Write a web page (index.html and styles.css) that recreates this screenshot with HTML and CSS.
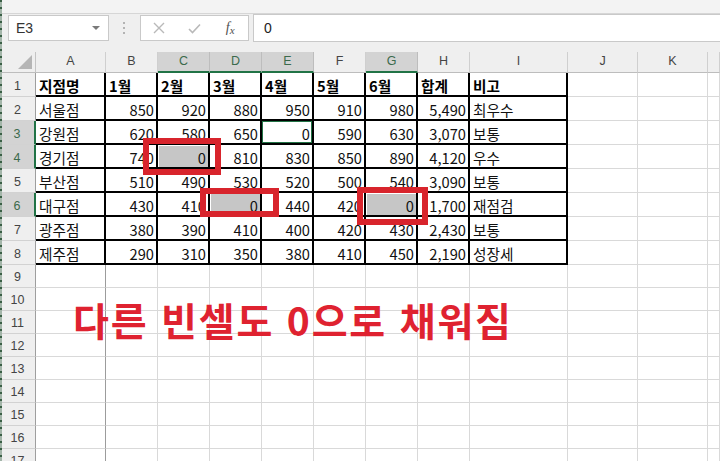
FILE: index.html
```html
<!DOCTYPE html>
<html lang="ko">
<head>
<meta charset="utf-8">
<title>Sheet</title>
<link rel="stylesheet" href="styles.css">
</head>
<body>
<div class="app">
  <div class="top"></div>
  <div class="fbar">
    <div class="namebox"><span class="ref">E3</span><span class="caret"></span></div>
    <div class="dots"><i></i><i></i><i></i></div>
    <div class="fbtns">
      <span class="fbtn"><svg width="12" height="12" viewBox="0 0 12 12"><path d="M1 1L11 11M11 1L1 11" stroke="#b9b9b9" stroke-width="1.4" fill="none"/></svg></span>
      <span class="fbtn"><svg width="13" height="11" viewBox="0 0 13 11"><path d="M1 6L4.5 9.5L12 1.5" stroke="#b9b9b9" stroke-width="1.6" fill="none"/></svg></span>
      <span class="fbtn fx">f<span class="fxs">x</span></span>
    </div>
    <div class="finput">0</div>
  </div>
  <div class="sheet">
    <div class="corner"><svg width="14" height="14" viewBox="0 0 14 14"><path d="M14 0L14 14L0 14Z" fill="#b5b5b5"/></svg></div>
    <div class="ch">A</div><div class="ch">B</div><div class="ch sel">C</div><div class="ch sel">D</div><div class="ch sel">E</div><div class="ch">F</div><div class="ch sel">G</div><div class="ch">H</div><div class="ch">I</div><div class="ch">J</div><div class="ch">K</div><div class="ch"></div>

    <div class="rh">1</div><div class="c t b">지점명</div><div class="c t b">1월</div><div class="c t b">2월</div><div class="c t b">3월</div><div class="c t b">4월</div><div class="c t b">5월</div><div class="c t b">6월</div><div class="c t b">합계</div><div class="c t b">비고</div><div class="c"></div><div class="c"></div><div class="c"></div>

    <div class="rh">2</div><div class="c t">서울점</div><div class="c t n">850</div><div class="c t n">920</div><div class="c t n">880</div><div class="c t n">950</div><div class="c t n">910</div><div class="c t n">980</div><div class="c t n">5,490</div><div class="c t">최우수</div><div class="c"></div><div class="c"></div><div class="c"></div>

    <div class="rh sel">3</div><div class="c t">강원점</div><div class="c t n">620</div><div class="c t n">580</div><div class="c t n">650</div><div class="c t n act">0</div><div class="c t n">590</div><div class="c t n">630</div><div class="c t n">3,070</div><div class="c t">보통</div><div class="c"></div><div class="c"></div><div class="c"></div>

    <div class="rh sel">4</div><div class="c t">경기점</div><div class="c t n">740</div><div class="c t n hl">0</div><div class="c t n">810</div><div class="c t n">830</div><div class="c t n">850</div><div class="c t n">890</div><div class="c t n">4,120</div><div class="c t">우수</div><div class="c"></div><div class="c"></div><div class="c"></div>

    <div class="rh">5</div><div class="c t">부산점</div><div class="c t n">510</div><div class="c t n">490</div><div class="c t n">530</div><div class="c t n">520</div><div class="c t n">500</div><div class="c t n">540</div><div class="c t n">3,090</div><div class="c t">보통</div><div class="c"></div><div class="c"></div><div class="c"></div>

    <div class="rh sel">6</div><div class="c t">대구점</div><div class="c t n">430</div><div class="c t n">410</div><div class="c t n hl">0</div><div class="c t n">440</div><div class="c t n">420</div><div class="c t n hl">0</div><div class="c t n">1,700</div><div class="c t">재점검</div><div class="c"></div><div class="c"></div><div class="c"></div>

    <div class="rh">7</div><div class="c t">광주점</div><div class="c t n">380</div><div class="c t n">390</div><div class="c t n">410</div><div class="c t n">400</div><div class="c t n">420</div><div class="c t n">430</div><div class="c t n">2,430</div><div class="c t">보통</div><div class="c"></div><div class="c"></div><div class="c"></div>

    <div class="rh">8</div><div class="c t">제주점</div><div class="c t n">290</div><div class="c t n">310</div><div class="c t n">350</div><div class="c t n">380</div><div class="c t n">410</div><div class="c t n">450</div><div class="c t n">2,190</div><div class="c t">성장세</div><div class="c"></div><div class="c"></div><div class="c"></div>

    <div class="rh">9</div><div class="c fz"></div><div class="c"></div><div class="c"></div><div class="c"></div><div class="c"></div><div class="c"></div><div class="c"></div><div class="c"></div><div class="c"></div><div class="c"></div><div class="c"></div><div class="c"></div>
    <div class="rh">10</div><div class="c fz"></div><div class="c"></div><div class="c"></div><div class="c"></div><div class="c"></div><div class="c"></div><div class="c"></div><div class="c"></div><div class="c"></div><div class="c"></div><div class="c"></div><div class="c"></div>
    <div class="rh">11</div><div class="c fz"></div><div class="c"></div><div class="c"></div><div class="c"></div><div class="c"></div><div class="c"></div><div class="c"></div><div class="c"></div><div class="c"></div><div class="c"></div><div class="c"></div><div class="c"></div>
    <div class="rh">12</div><div class="c fz"></div><div class="c"></div><div class="c"></div><div class="c"></div><div class="c"></div><div class="c"></div><div class="c"></div><div class="c"></div><div class="c"></div><div class="c"></div><div class="c"></div><div class="c"></div>
    <div class="rh">13</div><div class="c fz"></div><div class="c"></div><div class="c"></div><div class="c"></div><div class="c"></div><div class="c"></div><div class="c"></div><div class="c"></div><div class="c"></div><div class="c"></div><div class="c"></div><div class="c"></div>
    <div class="rh">14</div><div class="c fz"></div><div class="c"></div><div class="c"></div><div class="c"></div><div class="c"></div><div class="c"></div><div class="c"></div><div class="c"></div><div class="c"></div><div class="c"></div><div class="c"></div><div class="c"></div>
    <div class="rh">15</div><div class="c fz"></div><div class="c"></div><div class="c"></div><div class="c"></div><div class="c"></div><div class="c"></div><div class="c"></div><div class="c"></div><div class="c"></div><div class="c"></div><div class="c"></div><div class="c"></div>
    <div class="rh">16</div><div class="c fz"></div><div class="c"></div><div class="c"></div><div class="c"></div><div class="c"></div><div class="c"></div><div class="c"></div><div class="c"></div><div class="c"></div><div class="c"></div><div class="c"></div><div class="c"></div>
    <div class="rh">17</div><div class="c fz"></div><div class="c"></div><div class="c"></div><div class="c"></div><div class="c"></div><div class="c"></div><div class="c"></div><div class="c"></div><div class="c"></div><div class="c"></div><div class="c"></div><div class="c"></div>
  </div>

  <div class="mark m1"></div>
  <div class="mark m2"></div>
  <div class="mark m3"></div>
  <div class="note">다른 빈셀도 0으로 채워짐</div>
  <div class="edge"></div>
</div>
</body>
</html>
```

FILE: styles.css
```css
* { box-sizing: border-box; margin: 0; padding: 0; }
html, body { width: 720px; height: 461px; overflow: hidden; }
body { background: #fff; font-family: "Noto Sans CJK KR", "Noto Sans", sans-serif; }

.app { position: relative; width: 720px; height: 461px; overflow: hidden; background: #efefef; }

.top { height: 14px; background: #f3f3f3; border-bottom: 1px solid #d6d6d6; }

.fbar { display: flex; align-items: center; height: 28px; padding-left: 8px; margin-bottom: 10px; }

.namebox {
  display: flex; align-items: center; justify-content: space-between;
  width: 101px; height: 26px; background: #fff; border: 1px solid #c9c9c9;
  padding: 0 8px 0 7px;
  font-family: "Liberation Sans", Arial, sans-serif; font-size: 14px; color: #333;
}
.caret { width: 0; height: 0; border-left: 4px solid transparent; border-right: 4px solid transparent; border-top: 4px solid #7a7a7a; }

.dots { display: flex; flex-direction: column; gap: 3px; margin-left: 14px; width: 2px; }
.dots i { display: block; width: 2px; height: 2px; background: #b3b3b3; }

.fbtns {
  display: flex; align-items: center; margin-left: 15px;
  width: 109px; height: 26px; background: #fff; border: 1px solid #c9c9c9;
}
.fbtn { width: 36px; display: flex; justify-content: center; align-items: center; }
.fx { font-family: "Liberation Serif", "DejaVu Serif", serif; font-style: italic; font-size: 14px; color: #505050; }
.fxs { font-size: 11px; position: relative; top: 2px; }

.finput {
  flex: 1; margin-left: 4px; height: 28px; background: #fff;
  border: 1px solid #c9c9c9; border-right: none;
  display: flex; align-items: center; padding-left: 10px;
  font-family: "Liberation Sans", Arial, sans-serif; font-size: 14px; color: #222;
}

.sheet {
  display: grid;
  grid-template-columns: 36px 70px repeat(7, 52px) 98px 70px 70px 12px;
  grid-template-rows: 21px repeat(8, 24px) repeat(9, 23px);
  background: #fff;
}

.corner { background: #efefef; border-right: 1px solid #c4c4c4; border-bottom: 1px solid #bdbdbd; display: flex; justify-content: flex-end; align-items: flex-end; padding: 0 3px 3px 0; }

.ch {
  background: #efefef; color: #444; border-right: 1px solid #cfcfcf; border-bottom: 1px solid #bdbdbd;
  display: flex; align-items: center; justify-content: center; padding-bottom: 2px;
  font-family: "Liberation Sans", Arial, sans-serif; font-size: 12.5px;
}
.ch.sel { background: #d3d3d3; color: #3b6a4c; border-bottom: 2px solid #217346; border-right-color: #bdbdbd; padding-bottom: 1px; }

.rh {
  background: #efefef; color: #444; border-right: 1px solid #9e9e9e; border-bottom: 1px solid #d2d2d2;
  display: flex; align-items: center; justify-content: center; padding-top: 2px;
  font-family: "Liberation Sans", Arial, sans-serif; font-size: 12.5px;
}
.rh.sel { background: #d3d3d3; color: #3b6a4c; border-right: 2px solid #217346; }

.c {
  background: #fff; border-right: 1px solid #d9d9d9; border-bottom: 1px solid #d9d9d9;
  display: flex; align-items: center; padding: 3px 3px 0 3px;
  font-size: 14.67px; color: #111; white-space: nowrap; overflow: visible;
}
.c.n { justify-content: flex-end; padding-right: 2px; }
.c.t { border-right: 2px solid #000; border-bottom: 2px solid #000; }
.c.b { font-weight: bold; color: #000; }
.c.fz { border-right-color: #9c9c9c; }
.c.hl { background: #c6c6c6; box-shadow: inset 1px 1px 0 #fff; }
.c.act { box-shadow: inset 0 0 0 1px #217346; }

.mark { position: absolute; border: 6px solid #d8242c; }
.m1 { left: 143px; top: 138px; width: 78px; height: 37px; }
.m2 { left: 200px; top: 188px; width: 79px; height: 29px; }
.m3 { left: 357px; top: 187px; width: 71px; height: 38px; }

.note {
  position: absolute; left: 73px; top: 300px;
  font-size: 39px; font-weight: bold; line-height: 1; color: #df2230;
  letter-spacing: 1.8px;
  white-space: nowrap;
}

.edge {
  position: absolute; left: 0; top: 0; width: 2px; height: 461px;
  background: repeating-linear-gradient(to bottom, #3a5f45 0 2px, #a3b5a9 2px 7px);
}
```
